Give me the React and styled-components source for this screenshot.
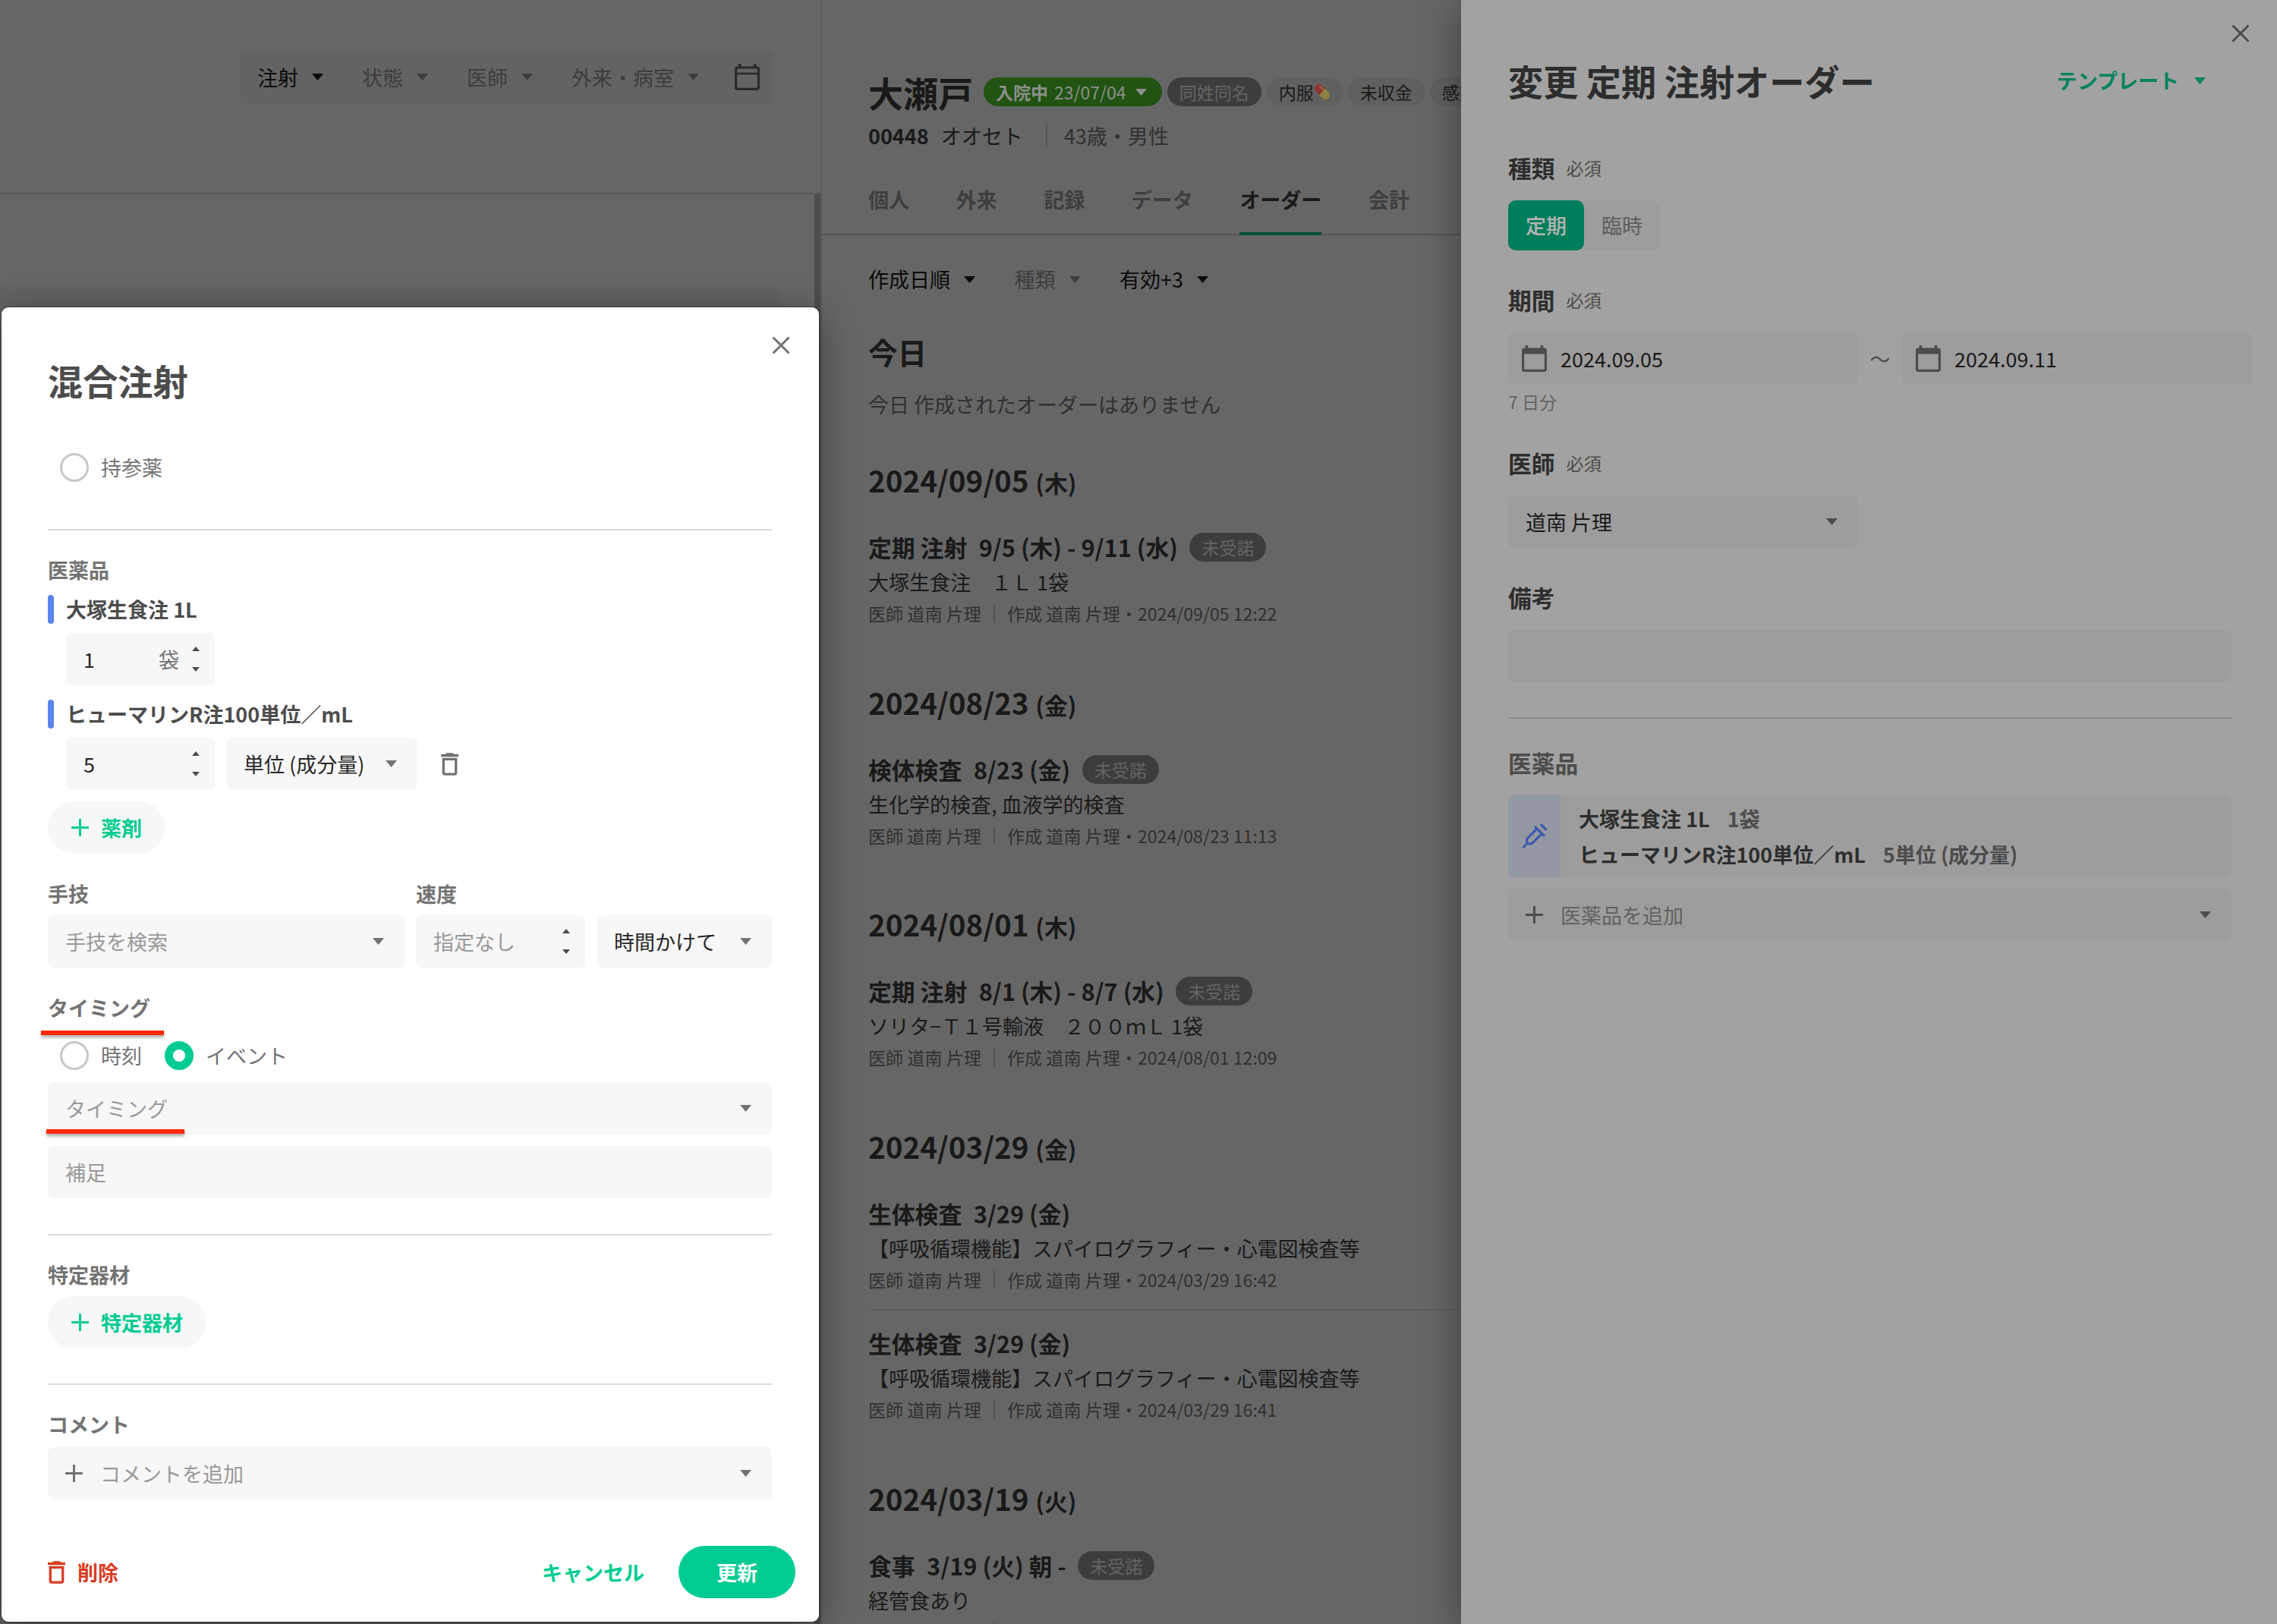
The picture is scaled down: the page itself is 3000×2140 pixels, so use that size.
import React from "react";
import styled, { createGlobalStyle } from "styled-components";

const GlobalStyle = createGlobalStyle`
  * {
    box-sizing: border-box;
  }
  body {
    margin: 0;
    background: #666666;
    font-family: "Noto Sans CJK JP", "Noto Sans", sans-serif;
    font-size: 27px;
    line-height: 40px;
  }
  svg {
    display: block;
    flex-shrink: 0;
  }
  h1, h2, h3, p {
    margin: 0;
  }
`;

/* ---------- icons ---------- */

const Caret = ({ w = 15, h = 9, color = "currentColor", up }) => (
  <svg width={w} height={h} viewBox="0 0 10 6" preserveAspectRatio="none">
    <path d={up ? "M0 6L5 0l5 6z" : "M0 0h10L5 6z"} fill={color} />
  </svg>
);

const CloseIcon = () => (
  <svg width="24" height="24" viewBox="0 0 24 24">
    <path d="M1.5 1.5l21 21M22.5 1.5l-21 21" stroke="currentColor" strokeWidth="3" />
  </svg>
);

const PlusIcon = () => (
  <svg width="23" height="23" viewBox="0 0 23 23">
    <path d="M11.5 0v23M0 11.5h23" stroke="currentColor" strokeWidth="3" />
  </svg>
);

const TrashIcon = () => (
  <svg width="23" height="30" viewBox="5 3 14 18">
    <path
      fill="currentColor"
      d="M6 19c0 1.1.9 2 2 2h8c1.1 0 2-.9 2-2V7H6v12zM8 9h8v10H8V9zm7.5-5l-1-1h-5l-1 1H5v2h14V4z"
    />
  </svg>
);

const CalendarIcon = ({ filled }) => (
  <svg width="33" height="35" viewBox="0 0 33 35">
    <path d="M6.5 0v5M26.5 0v5" stroke="currentColor" strokeWidth="3.6" />
    <rect x="1.6" y="5" width="29.8" height="28.4" rx="2" fill="none" stroke="currentColor" strokeWidth="3.1" />
    {filled ? (
      <path d="M2 5h29v6.5H2z" fill="currentColor" />
    ) : (
      <path d="M2 13h29" stroke="currentColor" strokeWidth="2.6" />
    )}
  </svg>
);

const SyringeIcon = () => (
  <svg width="34" height="34" viewBox="0 0 34 34" fill="none" stroke="currentColor" strokeWidth="3.1">
    <path d="M1.5 32l6.3-6.3M17 4l13 13M25 1.2l7.4 7.4" />
    <path d="M19.7 7.3L7.2 19.8c-1.1 3-.9 5.2.6 5.9.7 1.6 2.9 1.8 5.9.6l12.5-12.5" />
  </svg>
);

const PillIcon = () => (
  <svg width="22" height="22" viewBox="0 0 22 22">
    <g transform="rotate(45 11 11)">
      <rect x="-1" y="5.4" width="24" height="11.2" rx="5.6" fill="#8c7f3d" />
      <path d="M11 5.4H4.6a5.6 5.6 0 0 0 0 11.2H11z" fill="#8b332c" />
      <rect x="3" y="7" width="15" height="2.4" rx="1.2" fill="#a98a62" opacity="0.5" />
    </g>
  </svg>
);

/* ---------- page ---------- */

const Page = styled.div`
  position: relative;
  display: flex;
  width: 3000px;
  height: 2140px;
  overflow: hidden;
  background: #666666;
`;

const Row = styled.div`
  display: flex;
  align-items: ${({ $align }) => $align || "center"};
  gap: ${({ $gap }) => $gap || 0}px;
  margin-top: ${({ $mt }) => $mt || 0}px;
`;

const Filter = styled.div`
  display: flex;
  align-items: center;
  gap: 18px;
  color: ${({ $active }) => ($active ? "#090909" : "#3d3d3d")};
`;

/* ---------- list column ---------- */

const ListColumn = styled.div`
  display: flex;
  flex-direction: column;
  flex: 0 0 1083px;
  border-right: 2px solid #5b5b5b;
`;

const ListHeader = styled.div`
  display: flex;
  justify-content: flex-end;
  align-items: flex-start;
  height: 256px;
  padding: 67px 62px 0 0;
  border-bottom: 2px solid #555555;
`;

const FilterBar = styled.div`
  display: flex;
  align-items: center;
  gap: 51px;
  height: 69px;
  padding: 0 18px 0 23px;
  border-radius: 8px;
  background: #636363;
  > svg {
    margin-left: -4px;
    color: #292929;
  }
`;

const ListBody = styled.div`
  display: flex;
  justify-content: space-between;
  flex: 1;
`;

const ListCard = styled.div`
  width: 1027px;
  margin-top: 122px;
  background: #636363;
`;

const ScrollThumb = styled.div`
  width: 8px;
  background: #4d4d4d;
`;

/* ---------- patient column ---------- */

const PatientColumn = styled.div`
  flex: 0 0 842px;
  overflow: hidden;
  color: #191919;
`;

const PatientHeader = styled.div`
  height: 310px;
  padding: 86px 0 0 61px;
  box-shadow: inset 0 -2px 0 #565656;
  white-space: nowrap;
`;

const PatientName = styled.h1`
  margin-right: 7px;
  font-size: 46px;
  line-height: 70px;
`;

const Badge = styled.span`
  display: inline-flex;
  align-items: center;
  flex-shrink: 0;
  height: 38px;
  padding: 0 16px;
  border-radius: 19px;
  font-size: 23px;
  line-height: 38px;
  font-weight: 400;
  color: ${({ $color }) => $color || "#191919"};
  background: ${({ $bg }) => $bg || "#606060"};
`;

const StayBadge = styled(Badge)`
  padding-right: 20px;
  color: #8e8e8e;
  background: #215412;
  strong {
    margin-right: 8px;
  }
  svg {
    margin-left: 12px;
  }
`;

const Divider = styled.span`
  width: 2px;
  height: ${({ $h }) => $h}px;
  background: #525252;
`;

const Profile = styled.div`
  display: flex;
  align-items: center;
  height: 30px;
  margin-top: 8px;
  strong {
    margin-right: 16px;
  }
  ${Divider} {
    margin: 0 22px 0 30px;
  }
  em {
    font-style: normal;
    color: #303030;
  }
`;

const Tabs = styled.div`
  display: flex;
  gap: 61.6px;
  margin-top: 49px;
`;

const Tab = styled.div`
  height: 67px;
  font-weight: 700;
  color: ${({ $active }) => ($active ? "#191919" : "#3e3e3e")};
  border-bottom: 4px solid ${({ $active }) => ($active ? "#00523a" : "transparent")};
`;

const PatientBody = styled.div`
  padding: 38px 0 0 61px;
  white-space: nowrap;
`;

const DateHeading = styled.h2`
  height: 56px;
  margin: ${({ $mt }) => $mt || 0}px 0 ${({ $mb }) => $mb || 0}px;
  font-size: 38.5px;
  line-height: 56px;
  small {
    font-size: 30.8px;
    line-height: 0;
  }
`;

const EmptyNote = styled.p`
  margin-bottom: 51px;
  color: #303030;
`;

const Group = styled.section`
  margin-bottom: 71.5px;
`;

const Order = styled.article`
  height: 124px;
  & + & {
    height: 149.7px;
    margin-top: 22px;
    padding-top: 23.7px;
    border-top: 2px solid #5f5f5f;
  }
`;

const OrderTitle = styled.h3`
  display: flex;
  align-items: center;
  gap: 15.5px;
  height: 40px;
  font-size: 30.8px;
`;

const OrderText = styled.p`
  margin-top: 6px;
`;

const OrderMeta = styled.div`
  display: flex;
  align-items: center;
  gap: 16px;
  margin-top: 4px;
  font-size: 23.1px;
  line-height: 34px;
  color: #303030;
`;

/* ---------- order panel ---------- */

const Panel = styled.aside`
  position: relative;
  flex: 1;
  min-width: 0;
  padding: 0 60px 0 62px;
  background: #a2a2a2;
  box-shadow: 0 8px 50px rgba(0, 0, 0, 0.4);
  color: #2d2d2d;
`;

const PanelClose = styled.div`
  display: flex;
  justify-content: flex-end;
  padding-top: 32px;
  height: 71px;
  margin-right: -24px;
  color: #4c4c4c;
`;

const PanelHeader = styled.div`
  display: flex;
  justify-content: space-between;
  align-items: center;
  height: 70px;
  margin-bottom: 57px;
  padding-right: 34px;
  h1 {
    font-size: 46.2px;
    line-height: 70px;
  }
`;

const TemplateButton = styled.div`
  display: flex;
  align-items: center;
  gap: 20px;
  font-weight: 700;
  color: #00845c;
`;

const Section = styled.section`
  margin-bottom: ${({ $mb }) => $mb ?? 42}px;
`;

const SectionLabel = styled.div`
  display: flex;
  align-items: center;
  gap: 15px;
  height: 46px;
  margin-bottom: 20px;
  font-size: 30.8px;
  font-weight: 700;
  color: ${({ $muted }) => ($muted ? "#4c4c4c" : "#2d2d2d")};
  span {
    font-size: 23.1px;
    font-weight: 400;
    color: #4c4c4c;
  }
`;

const Segment = styled.div`
  display: inline-flex;
  border-radius: 10px;
  background: #9d9d9d;
  vertical-align: top;
`;

const SegmentItem = styled.div`
  width: 100px;
  height: 66px;
  border-radius: 10px;
  line-height: 66px;
  text-align: center;
  font-weight: ${({ $active }) => ($active ? 500 : 400)};
  color: ${({ $active }) => ($active ? "#b4b4b4" : "#5c5c5c")};
  background: ${({ $active }) => ($active ? "#007d5a" : "transparent")};
`;

const PanelField = styled.div`
  display: flex;
  align-items: center;
  flex-shrink: 0;
  gap: ${({ $gap }) => $gap || 0}px;
  width: ${({ $w }) => ($w ? `${$w}px` : "auto")};
  height: 69px;
  padding: 0 ${({ $pr }) => $pr || 23}px 0 ${({ $pl }) => $pl || 23}px;
  border-radius: 8px;
  color: ${({ $placeholder }) => ($placeholder ? "#626262" : "#191919")};
  background: #9d9d9d;
  svg {
    color: #4c4c4c;
  }
  svg:last-child:not(:first-child) {
    margin-left: auto;
  }
`;

const Tilde = styled.span`
  flex: 0 0 58px;
  text-align: center;
  color: #4c4c4c;
`;

const Days = styled.p`
  margin-top: 5px;
  font-size: 23.1px;
  line-height: 34px;
  color: #636363;
`;

const PanelRule = styled.div`
  height: 2px;
  margin-bottom: 35px;
  background: #8c8c8c;
`;

const DrugCard = styled.div`
  display: flex;
  height: 108px;
  margin-bottom: 15px;
  border-radius: 8px;
  overflow: hidden;
  background: #9d9d9d;
`;

const DrugIcon = styled.div`
  display: flex;
  align-items: center;
  justify-content: center;
  width: 69px;
  color: #3b59ad;
  background: #9498a2;
`;

const DrugLines = styled.div`
  padding: 8px 0 0 24px;
  font-weight: 700;
  line-height: 46.5px;
  span {
    margin-left: 23px;
    color: #4c4c4c;
  }
`;

/* ---------- mixed injection dialog ---------- */

const Dialog = styled.div`
  position: absolute;
  left: 2px;
  top: 405px;
  display: flex;
  flex-direction: column;
  width: 1077px;
  height: 1732px;
  padding: 0 62px 31px 61px;
  border-radius: 9px;
  background: #ffffff;
  box-shadow: 0 0 3px rgba(0, 0, 0, 0.6), 0 10px 50px rgba(0, 0, 0, 0.4);
  color: #4c4c4c;
`;

const DialogClose = styled.div`
  display: flex;
  justify-content: flex-end;
  height: 61px;
  margin-right: -24px;
  padding-top: 38px;
  color: #727272;
`;

const DialogTitle = styled.h1`
  margin-bottom: 61px;
  font-size: 46.2px;
  line-height: 70px;
`;

const RadioLabel = styled.label`
  display: flex;
  align-items: center;
  gap: 16px;
  height: 38px;
  color: #737373;
`;

const RadioMark = styled.span`
  width: 38px;
  height: 38px;
  border: ${({ $on }) => ($on ? "11.5px solid #00cc92" : "3px solid #c8c8c8")};
  border-radius: 50%;
  background: #ffffff;
`;

const RadioGroup = styled.div`
  display: flex;
  gap: 30px;
  padding-left: 16px;
`;

const Rule = styled.div`
  flex-shrink: 0;
  height: 2px;
  margin: ${({ $mt }) => $mt}px 0 32px;
  background: #dcdcdc;
`;

const Label = styled.div`
  margin-bottom: ${({ $mb }) => $mb ?? 8}px;
  font-weight: 700;
  line-height: 40px;
  color: #737373;
`;

const DrugName = styled.div`
  display: flex;
  align-items: center;
  gap: 16px;
  height: 38px;
  margin: ${({ $mt }) => $mt || 0}px 0 12px;
  font-weight: 700;
  &::before {
    content: "";
    width: 8px;
    height: 38px;
    border-radius: 4px;
    background: #5b84ee;
  }
`;

const DrugInputs = styled.div`
  display: flex;
  align-items: center;
  gap: 15px;
  padding-left: 24px;
  > svg {
    margin-left: 16px;
    color: #727272;
  }
`;

const Field = styled.div`
  display: flex;
  align-items: center;
  flex-shrink: 0;
  width: ${({ $w }) => ($w ? `${$w}px` : "auto")};
  height: 69px;
  padding: 0 ${({ $pr }) => $pr ?? 27}px 0 23px;
  border-radius: 8px;
  color: ${({ $placeholder }) => ($placeholder ? "#999999" : "#262626")};
  background: #f7f7f7;
  svg {
    color: #727272;
  }
  > svg:last-child {
    margin-left: auto;
  }
`;

const Unit = styled.span`
  margin-left: auto;
  margin-right: 17px;
  color: #737373;
`;

const Spinner = styled.span`
  display: flex;
  flex-direction: column;
  gap: 21px;
  margin-left: ${({ $unit }) => ($unit ? 0 : "auto")};
`;

const AddButton = styled.div`
  display: flex;
  align-items: center;
  align-self: flex-start;
  gap: 16px;
  height: 69px;
  margin-top: ${({ $mt }) => $mt || 0}px;
  padding: 0 30px 0 31px;
  border-radius: 35px;
  font-weight: 700;
  color: #00cc92;
  background: #f7f7f7;
`;

const Marked = styled.div`
  position: relative;
  margin-top: ${({ $mt }) => $mt || 0}px;
  margin-bottom: ${({ $mb }) => $mb || 0}px;
`;

const RedLine = styled.div`
  position: absolute;
  left: ${({ $x }) => $x}px;
  top: ${({ $y }) => $y}px;
  width: ${({ $w }) => $w}px;
  height: 6px;
  background: #ff2800;
  box-shadow: 0 3px 4px rgba(0, 0, 0, 0.35);
`;

const Footer = styled.div`
  display: flex;
  align-items: center;
  margin-top: auto;
  margin-right: -31px;
  font-weight: 700;
`;

const DeleteButton = styled.div`
  display: flex;
  align-items: center;
  gap: 16px;
  color: #d83c22;
`;

const CancelButton = styled.div`
  margin-left: auto;
  margin-right: 45px;
  color: #00cc92;
`;

const SubmitButton = styled.div`
  width: 154px;
  height: 69px;
  border-radius: 35px;
  line-height: 69px;
  text-align: center;
  color: #ffffff;
  background: #00cc92;
`;

const groups = [
  {
    date: "2024/09/05",
    day: "木",
    orders: [
      { kind: "定期 注射", term: "9/5 (木) - 9/11 (水)", pending: true, text: "大塚生食注　１Ｌ 1袋", at: "2024/09/05 12:22" },
    ],
  },
  {
    date: "2024/08/23",
    day: "金",
    orders: [
      { kind: "検体検査", term: "8/23 (金)", pending: true, text: "生化学的検査, 血液学的検査", at: "2024/08/23 11:13" },
    ],
  },
  {
    date: "2024/08/01",
    day: "木",
    orders: [
      { kind: "定期 注射", term: "8/1 (木) - 8/7 (水)", pending: true, text: "ソリタ−Ｔ１号輸液　２００ｍＬ 1袋", at: "2024/08/01 12:09" },
    ],
  },
  {
    date: "2024/03/29",
    day: "金",
    orders: [
      { kind: "生体検査", term: "3/29 (金)", text: "【呼吸循環機能】スパイログラフィー・心電図検査等", at: "2024/03/29 16:42" },
      { kind: "生体検査", term: "3/29 (金)", text: "【呼吸循環機能】スパイログラフィー・心電図検査等", at: "2024/03/29 16:41" },
    ],
  },
  {
    date: "2024/03/19",
    day: "火",
    orders: [
      { kind: "食事", term: "3/19 (火) 朝 -", pending: true, text: "経管食あり", at: "2024/03/19 12:00" },
    ],
  },
];

const tabs = ["個人", "外来", "記録", "データ", "オーダー", "会計"];

const SelectFilter = ({ label, active }) => (
  <Filter $active={active}>
    <span>{label}</span>
    <Caret />
  </Filter>
);

const Spin = ({ unit }) => (
  <Spinner $unit={unit}>
    <Caret w={10} h={6} color="#4c4c4c" up />
    <Caret w={10} h={6} color="#4c4c4c" />
  </Spinner>
);

const OrderItem = ({ order }) => (
  <Order>
    <OrderTitle>
      <span>{order.kind}</span>
      <span>{order.term}</span>
      {order.pending && (
        <Badge $bg="#3d3d3d" $color="#646464">
          未受諾
        </Badge>
      )}
    </OrderTitle>
    <OrderText>{order.text}</OrderText>
    <OrderMeta>
      <span>医師 道南 片理</span>
      <Divider $h={23} />
      <span>作成 道南 片理・{order.at}</span>
    </OrderMeta>
  </Order>
);

const ListView = () => (
  <ListColumn>
    <ListHeader>
      <FilterBar>
        <SelectFilter label="注射" active />
        <SelectFilter label="状態" />
        <SelectFilter label="医師" />
        <SelectFilter label="外来・病室" />
        <CalendarIcon />
      </FilterBar>
    </ListHeader>
    <ListBody>
      <ListCard />
      <ScrollThumb />
    </ListBody>
  </ListColumn>
);

const PatientView = () => (
  <PatientColumn>
    <PatientHeader>
      <Row $gap={7}>
        <PatientName>大瀬戸</PatientName>
        <StayBadge>
          <strong>入院中</strong>23/07/04
          <Caret />
        </StayBadge>
        <Badge $bg="#3d3d3d" $color="#646464">
          同姓同名
        </Badge>
        <Badge>
          内服
          <PillIcon />
        </Badge>
        <Badge>未収金</Badge>
        <Badge>感染症</Badge>
      </Row>
      <Profile>
        <strong>00448</strong>
        <span>オオセト</span>
        <Divider $h={30} />
        <em>43歳・男性</em>
      </Profile>
      <Tabs>
        {tabs.map((tab) => (
          <Tab key={tab} $active={tab === "オーダー"}>
            {tab}
          </Tab>
        ))}
      </Tabs>
    </PatientHeader>
    <PatientBody>
      <Row $gap={51.5}>
        <SelectFilter label="作成日順" active />
        <SelectFilter label="種類" />
        <SelectFilter label="有効+3" active />
      </Row>
      <DateHeading $mt={47} $mb={22}>
        今日
      </DateHeading>
      <EmptyNote>今日 作成されたオーダーはありません</EmptyNote>
      {groups.map((group) => (
        <Group key={group.date}>
          <DateHeading $mb={41}>
            {group.date} <small>({group.day})</small>
          </DateHeading>
          {group.orders.map((order) => (
            <OrderItem key={order.at} order={order} />
          ))}
        </Group>
      ))}
    </PatientBody>
  </PatientColumn>
);

const OrderPanel = () => (
  <Panel>
    <PanelClose>
      <CloseIcon />
    </PanelClose>
    <PanelHeader>
      <h1>変更 定期 注射オーダー</h1>
      <TemplateButton>
        テンプレート
        <Caret />
      </TemplateButton>
    </PanelHeader>
    <Section>
      <SectionLabel>
        種類<span>必須</span>
      </SectionLabel>
      <Segment>
        <SegmentItem $active>定期</SegmentItem>
        <SegmentItem>臨時</SegmentItem>
      </Segment>
    </Section>
    <Section $mb={41}>
      <SectionLabel>
        期間<span>必須</span>
      </SectionLabel>
      <Row>
        <PanelField $w={461} $gap={18} $pl={18}>
          <CalendarIcon filled />
          <span>2024.09.05</span>
        </PanelField>
        <Tilde>〜</Tilde>
        <PanelField $w={461} $gap={18} $pl={18}>
          <CalendarIcon filled />
          <span>2024.09.11</span>
        </PanelField>
      </Row>
      <Days>7 日分</Days>
    </Section>
    <Section>
      <SectionLabel>
        医師<span>必須</span>
      </SectionLabel>
      <PanelField $w={461} $pr={27}>
        <span>道南 片理</span>
        <Caret />
      </PanelField>
    </Section>
    <Section $mb={46}>
      <SectionLabel>備考</SectionLabel>
      <PanelField />
    </Section>
    <PanelRule />
    <Section>
      <SectionLabel $muted>医薬品</SectionLabel>
      <DrugCard>
        <DrugIcon>
          <SyringeIcon />
        </DrugIcon>
        <DrugLines>
          <div>
            大塚生食注 1L<span>1袋</span>
          </div>
          <div>
            ヒューマリンR注100単位／mL<span>5単位 (成分量)</span>
          </div>
        </DrugLines>
      </DrugCard>
      <PanelField $placeholder $gap={23} $pr={27}>
        <PlusIcon />
        <span>医薬品を追加</span>
        <Caret />
      </PanelField>
    </Section>
  </Panel>
);

const MixDialog = () => (
  <Dialog>
    <DialogClose>
      <CloseIcon />
    </DialogClose>
    <DialogTitle>混合注射</DialogTitle>
    <RadioGroup>
      <RadioLabel>
        <RadioMark />
        持参薬
      </RadioLabel>
    </RadioGroup>

    <Rule $mt={62} />
    <Label $mb={13}>医薬品</Label>
    <DrugName>大塚生食注 1L</DrugName>
    <DrugInputs>
      <Field $w={196} $pr={20}>
        1<Unit>袋</Unit>
        <Spin unit />
      </Field>
    </DrugInputs>
    <DrugName $mt={19}>ヒューマリンR注100単位／mL</DrugName>
    <DrugInputs>
      <Field $w={196} $pr={20}>
        5<Spin />
      </Field>
      <Field $w={252}>
        単位 (成分量)
        <Caret />
      </Field>
      <TrashIcon />
    </DrugInputs>
    <AddButton $mt={15}>
      <PlusIcon />
      薬剤
    </AddButton>

    <Row $gap={15} $mt={33} $align="flex-end">
      <div>
        <Label>手技</Label>
        <Field $w={470} $placeholder>
          手技を検索
          <Caret />
        </Field>
      </div>
      <div>
        <Label>速度</Label>
        <Field $w={223} $pr={20} $placeholder>
          指定なし
          <Spin />
        </Field>
      </div>
      <Field $w={231}>
        時間かけて
        <Caret />
      </Field>
    </Row>

    <Marked $mt={33}>
      <Label $mb={24}>タイミング</Label>
      <RedLine $x={-9} $y={50} $w={162} />
    </Marked>
    <RadioGroup>
      <RadioLabel>
        <RadioMark />
        時刻
      </RadioLabel>
      <RadioLabel>
        <RadioMark $on />
        イベント
      </RadioLabel>
    </RadioGroup>
    <Marked $mt={16} $mb={15}>
      <Field $placeholder>
        タイミング
        <Caret />
      </Field>
      <RedLine $x={-2} $y={62} $w={182} />
    </Marked>
    <Field $placeholder>補足</Field>

    <Rule $mt={47} />
    <Label>特定器材</Label>
    <AddButton>
      <PlusIcon />
      特定器材
    </AddButton>

    <Rule $mt={46} />
    <Label $mb={10}>コメント</Label>
    <Field $placeholder>
      <Row $gap={23}>
        <PlusIcon />
        コメントを追加
      </Row>
      <Caret />
    </Field>

    <Footer>
      <DeleteButton>
        <TrashIcon />
        削除
      </DeleteButton>
      <CancelButton>キャンセル</CancelButton>
      <SubmitButton>更新</SubmitButton>
    </Footer>
  </Dialog>
);

const App = () => {
  return (
    <>
      <GlobalStyle />
      <Page>
        <ListView />
        <PatientView />
        <OrderPanel />
        <MixDialog />
      </Page>
    </>
  );
};

export default App;
